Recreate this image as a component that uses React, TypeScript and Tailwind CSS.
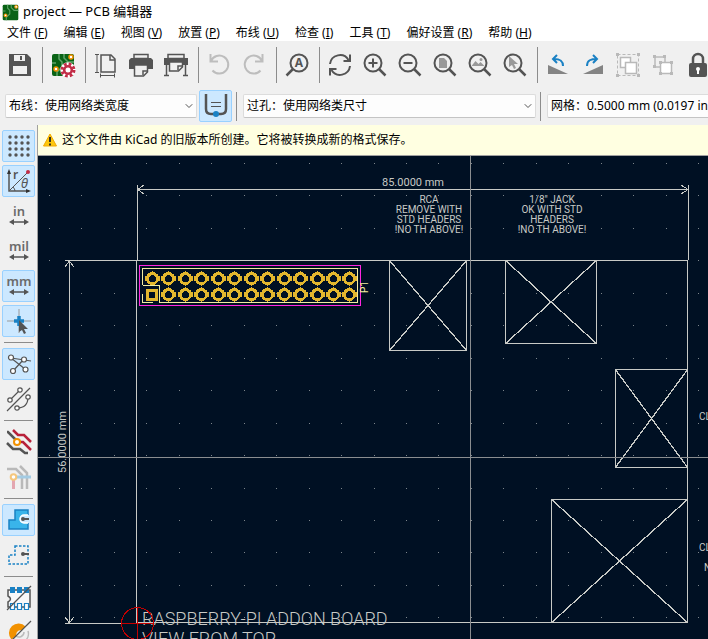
import React from "react";
import { ChevronDown } from "lucide-react";

type IconProps = { children: React.ReactNode };

const Icon = ({ children }: IconProps) => (
  <svg
    width="24"
    height="24"
    viewBox="0 0 24 24"
    fill="none"
    stroke="#545454"
    strokeWidth="2"
    className="shrink-0 overflow-visible"
    aria-hidden="true"
  >
    {children}
  </svg>
);

const BoardArt = () => (
  <>
    <rect x="1" y="1" width="22" height="22" rx="2" fill="#0a6316" stroke="none" />
    <path d="M8 1v5l3 3v5l-5 5v4M13 1v4l4 4h6M1 10h4" stroke="#5fa568" strokeWidth="1.5" />
    <circle cx="5" cy="16" r="2" fill="#fff" stroke="#f29100" strokeWidth="1.5" />
    <circle cx="20" cy="4" r="2" fill="#fff" stroke="#f29100" strokeWidth="1.5" />
  </>
);

const Magnifier = ({ children }: IconProps) => (
  <Icon>
    <circle cx="10" cy="10" r="8.5" />
    <path d="M16 16l6.5 6.5" strokeWidth="2.5" />
    {children}
  </Icon>
);

const groups = [
  [
    {
      label: "保存",
      icon: (
        <Icon>
          <path
            d="M1 1h18l4 4v18H1zM6 2v6h11V2zM5 13v8h14v-8z"
            fill="#545454"
            fillRule="evenodd"
            stroke="none"
          />
          <path d="M13 3v4" />
        </Icon>
      ),
    },
  ],
  [
    {
      label: "电路板设置",
      icon: (
        <Icon>
          <BoardArt />
          <circle cx="17" cy="17" r="6" stroke="#fff" strokeWidth="3.5" />
          <circle cx="17" cy="17" r="6" stroke="#c22d47" strokeWidth="3" strokeDasharray="2.7 2" />
          <circle cx="17" cy="17" r="3.8" fill="#fff" stroke="#c22d47" strokeWidth="2.6" />
        </Icon>
      ),
    },
  ],
  [
    {
      label: "页面设置",
      icon: (
        <Icon>
          <path d="M7 2h10l4 4v13H7z" strokeWidth="1.5" />
          <path d="M16 2v5h5" strokeWidth="1.5" />
          <path d="M1 1.5h4M3 2v17M1 19.5h4M6 22.5h15M6.5 20.5v4M20.5 20.5v4" strokeWidth="1" />
        </Icon>
      ),
    },
    {
      label: "打印",
      icon: (
        <Icon>
          <path d="M5 1.5h14v4H5z" strokeWidth="1.5" />
          <path d="M2 5h20l2 2v9H0V7z" fill="#545454" stroke="none" />
          <path d="M5.5 12h13v7l-4 4h-9z" fill="#f0f0f0" strokeWidth="1.5" />
          <path d="M14 22v-4h4" strokeWidth="1.5" />
        </Icon>
      ),
    },
    {
      label: "绘制",
      icon: (
        <Icon>
          <path d="M4 1.5h16v4H4z" strokeWidth="1.5" />
          <path d="M0 5h24v7H0z" fill="#545454" stroke="none" />
          <path d="M5.5 9h13v5l-4 4h-9z" fill="#f0f0f0" strokeWidth="1.5" />
          <path d="M14 17v-4h4" strokeWidth="1.5" />
          <path d="M2.5 11v11M21.5 11v11M0 22.5h5M19 22.5h5" strokeWidth="1.5" />
        </Icon>
      ),
    },
  ],
  [
    {
      label: "撤消",
      icon: (
        <Icon>
          <path d="M3.5 1v7.5H11M4 8a9 9 0 1 1 1.5 9.5" stroke="#bdbdbd" />
        </Icon>
      ),
    },
    {
      label: "重做",
      icon: (
        <Icon>
          <path d="M20.5 1v7.5H13M20 8a9 9 0 1 0-1.5 9.5" stroke="#bdbdbd" />
        </Icon>
      ),
    },
  ],
  [
    {
      label: "查找",
      icon: (
        <Icon>
          <circle cx="14" cy="10" r="8.5" />
          <path d="M8 16l-6.5 6.5" strokeWidth="2.5" />
          <text
            x="14"
            y="14"
            textAnchor="middle"
            fontSize="12"
            fontWeight="bold"
            fill="#545454"
            stroke="none"
          >
            A
          </text>
        </Icon>
      ),
    },
  ],
  [
    {
      label: "刷新",
      icon: (
        <Icon>
          <path d="M2 11a10 10 0 0 1 18.5-4M22 13a10 10 0 0 1-18.5 4" />
          <path d="M22 1.5V8h-6.5M2 22.5V16h6.5" />
        </Icon>
      ),
    },
    {
      label: "放大",
      icon: (
        <Magnifier>
          <path d="M10 5.5v9M5.5 10h9" />
        </Magnifier>
      ),
    },
    {
      label: "缩小",
      icon: (
        <Magnifier>
          <path d="M5.5 10h9" />
        </Magnifier>
      ),
    },
    {
      label: "缩放到页面",
      icon: (
        <Magnifier>
          <path d="M6 5h5l3 3v7H6z" fill="#999" stroke="none" />
        </Magnifier>
      ),
    },
    {
      label: "缩放到对象",
      icon: (
        <Magnifier>
          <path d="M3.5 13l4-5 3 3 2-2 4 4z" fill="#999" stroke="none" />
          <circle cx="13" cy="6.5" r="1.5" fill="#999" stroke="none" />
        </Magnifier>
      ),
    },
    {
      label: "缩放到选择",
      icon: (
        <Magnifier>
          <path d="M6 3v11l3-2 2 4 2-1-2-4h4z" fill="#999" stroke="none" />
        </Magnifier>
      ),
    },
  ],
  [
    {
      label: "逆时针旋转",
      icon: (
        <Icon>
          <path d="M2 12l20 9H2z" fill="#848484" stroke="none" />
          <path d="M17 13c0-6-4-7-9-7M11 2L7 6l4 4" stroke="#1a81c4" />
        </Icon>
      ),
    },
    {
      label: "顺时针旋转",
      icon: (
        <Icon>
          <path d="M22 12L2 21h20z" fill="#848484" stroke="none" />
          <path d="M6 13c0-6 4-7 10-7M12 2l4 4-4 4" stroke="#1a81c4" />
        </Icon>
      ),
    },
    {
      label: "分组",
      icon: (
        <Icon>
          <path d="M1.5 1.5h21v21h-21z" stroke="#b9b9b9" strokeWidth="1" strokeDasharray="3 2" />
          <path d="M4.5 4.5h10v10h-10z" fill="#fff" stroke="#b9b9b9" strokeWidth="1.5" />
          <path d="M9.5 9.5h11v11h-11z" fill="#fff" stroke="#b9b9b9" strokeWidth="1.5" />
          <path d="M0 0h3v3H0zM21 0h3v3h-3zM0 21h3v3H0zM21 21h3v3h-3z" fill="#b9b9b9" stroke="none" />
        </Icon>
      ),
    },
    {
      label: "取消分组",
      icon: (
        <Icon>
          <path d="M4 4h10v10H4z" fill="#f0f0f0" stroke="#b9b9b9" strokeWidth="1.5" />
          <path d="M9.5 9.5h11v11h-11z" fill="#fff" stroke="#b9b9b9" strokeWidth="1.5" />
          <path
            d="M2 2h3v3H2zM12 2h3v3h-3zM2 12h3v3H2zM8 8h3v3H8zM19 8h3v3h-3zM8 19h3v3H8zM19 19h3v3h-3z"
            fill="#b9b9b9"
            stroke="none"
          />
        </Icon>
      ),
    },
    {
      label: "锁定",
      icon: (
        <Icon>
          <path d="M7 11V6a5 5 0 0 1 10 0v5" strokeWidth="2.5" />
          <rect x="3" y="10" width="18" height="14" rx="2" fill="#545454" stroke="none" />
          <circle cx="12" cy="16" r="2" fill="#fff" stroke="none" />
          <path d="M12 16v5" stroke="#fff" />
        </Icon>
      ),
    },
  ],
];

const UnitIcon = ({ unit }: { unit: string }) => (
  <Icon>
    <text
      x="12"
      y="12"
      textAnchor="middle"
      fontSize="13"
      fontWeight="600"
      fill="#6b6b6b"
      stroke="none"
    >
      {unit}
    </text>
    <path d="M5 18h14" strokeWidth="1.5" />
    <path d="M2 18l5-3v6zM22 18l-5-3v6z" fill="#545454" stroke="none" />
  </Icon>
);

const sideGroups = [
  [
    {
      label: "显示栅格",
      active: true,
      icon: (
        <Icon>
          {[3, 9, 15, 21].map((y) =>
            [3, 9, 15, 21].map((x) => (
              <circle key={`${x}-${y}`} cx={x} cy={y} r="1.7" fill="#545454" stroke="none" />
            ))
          )}
        </Icon>
      ),
    },
    {
      label: "极坐标",
      active: true,
      icon: (
        <Icon>
          <path d="M2 2v20h20" strokeWidth="1.5" />
          <path d="M0 5l2-5 2 5zM19 20l5 2-5 2z" fill="#333" stroke="none" />
          <path d="M2 22L21 3M6 18q2 2 2 4" strokeWidth="1" />
          <circle cx="21" cy="3" r="2" fill="#c22d47" stroke="none" />
          <text x="6" y="10" fontSize="12" fontWeight="600" fill="#545454" stroke="none">
            r
          </text>
          <text x="14" y="19" fontSize="13" fontStyle="italic" fill="#545454" stroke="none">
            θ
          </text>
        </Icon>
      ),
    },
    { label: "英寸", active: false, icon: <UnitIcon unit="in" /> },
    { label: "密耳", active: false, icon: <UnitIcon unit="mil" /> },
    { label: "毫米", active: true, icon: <UnitIcon unit="mm" /> },
    {
      label: "全屏光标",
      active: true,
      icon: (
        <Icon>
          <path d="M12 0v24M0 12h24" stroke="#999" strokeWidth="1" />
          <path d="M12 7v10M7 12h10" stroke="#1a81c4" strokeWidth="3.5" />
          <path d="M12 11v12l3-2 2 4 2-1-2-4h4z" fill="#545454" stroke="none" />
        </Icon>
      ),
    },
  ],
  [
    {
      label: "显示飞线",
      active: true,
      icon: (
        <Icon>
          <path d="M4 6l14 11M4 6l20 3M17 7L6 19" strokeWidth="1.2" />
          {[[4, 5.5], [17, 7.5], [6, 19], [18.5, 17.5]].map(([x, y]) => (
            <circle key={x} cx={x} cy={y} r="2.5" fill="#fff" strokeWidth="1.2" />
          ))}
        </Icon>
      ),
    },
    {
      label: "曲线飞线",
      active: false,
      icon: (
        <Icon>
          <path d="M0 24L23 1M3 13L13 3M10 21q11 0 11-11" strokeWidth="1.2" />
          {[[3, 13], [13, 3], [10, 21], [21, 10]].map(([x, y]) => (
            <circle key={x} cx={x} cy={y} r="2.2" fill="#fff" strokeWidth="1.2" />
          ))}
        </Icon>
      ),
    },
  ],
  [
    {
      label: "高对比度",
      active: false,
      icon: (
        <Icon>
          <path d="M0 2h1l9 9M0 13l6 6h7l5 4h3" strokeWidth="2.5" />
          <path d="M6 0l5 5h6l7 7M10 12h6l8 8" stroke="#b8213a" strokeWidth="2.5" />
          <circle cx="10" cy="12" r="3" fill="#fff" stroke="#f29100" />
        </Icon>
      ),
    },
    {
      label: "网络高亮",
      active: false,
      icon: (
        <Icon>
          <path d="M0 4h9l6 6v14M13 1l7 7v16" stroke="#b9b9b9" strokeWidth="2.5" />
          <path d="M8 12h16" stroke="#a3cbe3" strokeWidth="3" />
          <path d="M6.5 12v12" stroke="#e3a6b0" strokeWidth="3" />
          <circle cx="6.5" cy="12" r="2.8" fill="#fff" stroke="#f5c77c" />
        </Icon>
      ),
    },
  ],
  [
    {
      label: "填充区域",
      active: true,
      icon: (
        <Icon>
          <path d="M8 2h13v5h-4a4 4 0 0 0 0 8h4v6H2v-9h6z" fill="#39b4ea" stroke="none" />
          <path
            d="M21 7V2H8v10H2v9h19v-6"
            stroke="#1a81c4"
            strokeWidth="1.5"
          />
          <path d="M21 7h-4a4 4 0 0 0 0 8h4" stroke="#fff" strokeWidth="1.5" />
          <path d="M16 11h6" />
          <circle cx="16" cy="11" r="2" fill="#545454" stroke="none" />
        </Icon>
      ),
    },
    {
      label: "区域轮廓",
      active: false,
      icon: (
        <Icon>
          <path d="M8 3h13v18H2v-9h6z" stroke="#1a81c4" strokeWidth="1.5" strokeDasharray="2.5 1.5" />
          <path d="M16 11h6" />
          <circle cx="16" cy="11" r="2" fill="#545454" stroke="none" />
        </Icon>
      ),
    },
  ],
  [
    {
      label: "焊盘轮廓",
      active: false,
      icon: (
        <Icon>
          <path d="M1 4h22v17H1v-5q5-3 0-6z" strokeWidth="1.5" fill="#f8f8f8" />
          <path d="M3 1h5v6H3zM10 1h5v6h-5zM17 1h5v6h-5z" fill="#1a81c4" stroke="none" />
          <path
            d="M3.5 17.5h4v6h-4zM10.5 17.5h4v6h-4zM17.5 17.5h4v6h-4z"
            fill="#fff"
            stroke="#1a81c4"
            strokeWidth="1.2"
          />
          <path d="M0 24L24 0" strokeWidth="1.2" />
        </Icon>
      ),
    },
    {
      label: "过孔轮廓",
      active: false,
      icon: (
        <Icon>
          <path d="M21 10a9 9 0 0 1-15 9M17 11a5 5 0 0 1-8 4" stroke="#bbb" strokeWidth="1.5" />
          <path
            d="M4.5 18.5A9.500 9.500 0 0 1 18.500 5.500l-4 4a4 4 0 0 0-5 5z"
            fill="#f29100"
            stroke="none"
          />
          <path d="M0 24L24 0" strokeWidth="1.2" />
        </Icon>
      ),
    },
  ],
];

const menus = [
  ["文件", "F"],
  ["编辑", "E"],
  ["视图", "V"],
  ["放置", "P"],
  ["布线", "U"],
  ["检查", "I"],
  ["工具", "T"],
  ["偏好设置", "R"],
  ["帮助", "H"],
];

const dots = Array.from({ length: 70 }, (_, i) => Math.round(49 + i * 32.45));
const rows = Array.from({ length: 50 }, (_, i) => Math.round(163 + i * 32.45));
const pins = Array.from({ length: 13 }, (_, i) => Math.round(152 + i * 16.45));

// keepout boxes: left, top, right, bottom
const boxes = [
  [389, 260, 466, 350],
  [505, 260, 596, 343],
  [615, 369, 687, 467],
  [551, 499, 687, 622],
];

const notes = [
  { x: 429, lines: ["RCA", "REMOVE WITH", "STD HEADERS", "!NO TH ABOVE!"] },
  { x: 552, lines: ['1/8" JACK', "OK WITH STD", "HEADERS", "!NO TH ABOVE!"] },
];

const Pad = ({ x, y }: { x: number; y: number }) => (
  <>
    <circle cx={x + 0.5} cy={y + 0.5} r="5" strokeWidth="3" />
    <path d={`M${x - 6.5} ${y - 2}v5M${x + 7.5} ${y - 2}v5M${x} ${y - 6.5}h1M${x} ${y + 7.5}h1`} />
  </>
);

const BoardCanvas = () => (
  <svg
    className="h-full w-full font-['Roboto',sans-serif]"
    role="img"
    aria-label="PCB"
    shapeRendering="crispEdges"
  >
    <g transform="translate(-38 -156)" fill="none" stroke="#c8cac6">
      <g fill="#7d858b" stroke="none">
        {rows.map((y) => dots.map((x) => <rect key={`${x}-${y}`} x={x} y={y} width="1" height="1" />))}
      </g>

      <path d="M137.5 185v75M688.5 185v75M137 189.5h551M65 260.5h72M65 623.5h72M69.5 260v363" />
      <path d="M144 185l-6 4.5 6 4.5M681 185l7 4.5-7 4.5M65 267l4.5-6 4.5 6M65 617l4.5 6 4.5-6" />
      <rect x="136.5" y="260.5" width="551" height="362" />
      {boxes.map(([l, t, r, b]) => (
        <g key={`${l}-${t}`}>
          <rect x={l + 0.5} y={t + 0.5} width={r - l} height={b - t} />
          <path d={`M${l} ${t}L${r + 1} ${b + 1}M${r + 1} ${t}L${l} ${b + 1}`} strokeWidth="1.3" />
        </g>
      ))}

      <g fill="#c8cac6" stroke="none" fontSize="10">
        <text x="382" y="186" fontSize="11">
          85.0000 mm
        </text>
        <text transform="translate(66 473) rotate(-90)" fontSize="11">
          56.0000 mm
        </text>
        {notes.map((note) =>
          note.lines.map((line, i) => (
            <text key={`${note.x}-${i}`} x={note.x} y={203 + i * 10} textAnchor="middle">
              {line}
            </text>
          ))
        )}
        <text x="699" y="420">CL</text>
        <text x="699" y="551">CL</text>
        <text x="704" y="571">N</text>
        <g fontSize="18" fontWeight="300">
          <text x="142" y="625">RASPBERRY-PI ADDON BOARD</text>
          <text x="142" y="645">VIEW FROM TOP</text>
        </g>
      </g>

      <rect x="139.5" y="265.5" width="221" height="40" stroke="#ff26e2" />
      <g stroke="#e3b72e">
        <rect x="147" y="290" width="9" height="9" strokeWidth="3" />
        {pins.map((x, i) => (
          <React.Fragment key={x}>
            <Pad x={x} y={278} />
            {i > 0 && <Pad x={x} y={294} />}
          </React.Fragment>
        ))}
      </g>
      <path d="M142.5 285V268.5h215v34H159.5v-17h-17M142.5 294v8.5h10" stroke="#f2eda1" />
      <text transform="translate(368 293) rotate(-90)" fontSize="10" fill="#f2eda1" stroke="none">
        P1
      </text>

      <g stroke="#c40000">
        <circle cx="137.5" cy="623.5" r="16" />
        <path d="M121 623.5h33M137.5 607v33" />
      </g>
      <path d="M470.5 0v4000M0 457.5h4000" stroke="#8a8d90" />
    </g>
  </svg>
);

type PickerProps = { label: string; value: string; className: string };

const Picker = ({ label, value, className }: PickerProps) => (
  <div className={`relative shrink-0 ${className}`}>
    <select
      aria-label={label}
      className="h-6 w-full appearance-none rounded-xs border border-[#dcdcdc] border-b-[#c4c4c4] bg-[#fdfdfd] pl-[3px] pr-6 text-xs text-black outline-none"
    >
      <option>{value}</option>
    </select>
    <ChevronDown
      className="pointer-events-none absolute right-0.5 top-1.5 size-3 text-[#555]"
      strokeWidth={2}
    />
  </div>
);

export default function App() {
  return (
    <div className="flex h-screen w-full flex-col overflow-hidden bg-[#f0f0f0] font-['Noto_Sans','Noto_Sans_CJK_SC',sans-serif] text-xs text-black">
      <header className="flex h-6 shrink-0 items-center gap-1 bg-white px-0.5">
        <svg width="17" height="17" viewBox="0 0 24 24" fill="none" aria-hidden="true">
          <BoardArt />
        </svg>
        <h1 className="text-[13px]">project — PCB 编辑器</h1>
      </header>

      <nav className="flex h-[17px] shrink-0 items-center gap-4 whitespace-nowrap bg-white px-[7px]">
        {menus.map(([name, key]) => (
          <button key={key} type="button">
            {name} (<span className="underline">{key}</span>)
          </button>
        ))}
      </nav>

      <div className="flex h-12 shrink-0 items-center gap-px overflow-hidden pl-[3px]">
        {groups.map((group, i) => (
          <React.Fragment key={i}>
            {i > 0 && <span className="ml-1 mr-0.5 h-9 w-px shrink-0 bg-[#8c8c8c]" />}
            {group.map((tool) => (
              <button
                key={tool.label}
                type="button"
                aria-label={tool.label}
                className="flex h-8 w-[34px] shrink-0 items-center justify-center"
              >
                {tool.icon}
              </button>
            ))}
          </React.Fragment>
        ))}
      </div>

      <div className="flex h-9 shrink-0 items-center overflow-hidden pb-0.5 pl-[5px]">
        <Picker label="布线宽度" value="布线：使用网络类宽度" className="w-48" />
        <button
          type="button"
          aria-label="自动布线宽度"
          aria-pressed="true"
          className="ml-0.5 flex h-8 w-[33px] shrink-0 items-center justify-center rounded-xs border border-[#99d1ff] bg-[#cce8ff]"
        >
          <Icon>
            <path d="M2 0v15q0 5 5 5h10q5 0 5-5V0" strokeWidth="2.5" />
            <path d="M7 8.5h10M7 12.5h10" strokeWidth="1" />
            <circle cx="12" cy="20" r="3" fill="#1a81c4" stroke="none" />
          </Icon>
        </button>
        <span className="mx-1 h-[29px] w-px shrink-0 bg-[#8c8c8c]" />
        <Picker label="过孔尺寸" value="过孔：使用网络类尺寸" className="ml-0.5 w-[293px]" />
        <span className="mx-1 h-[29px] w-px shrink-0 bg-[#8c8c8c]" />
        <Picker label="网格" value="网格：0.5000 mm (0.0197 in)" className="ml-0.5 w-60" />
      </div>

      <div className="flex min-h-0 flex-1">
        <aside className="flex w-[38px] shrink-0 flex-col gap-[3px] overflow-hidden border-r border-[#a0a0a0] pl-0.5 pt-[5px]">
          {sideGroups.map((group, i) => (
            <React.Fragment key={i}>
              {i > 0 && <span className="my-0.5 ml-0.5 h-px w-[29px] shrink-0 bg-[#8c8c8c]" />}
              {group.map((tool) => (
                <button
                  key={tool.label}
                  type="button"
                  aria-label={tool.label}
                  aria-pressed={tool.active}
                  className={`flex h-8 w-[33px] shrink-0 items-center justify-center rounded-xs border ${
                    tool.active ? "border-[#99d1ff] bg-[#cce8ff]" : "border-transparent"
                  }`}
                >
                  {tool.icon}
                </button>
              ))}
            </React.Fragment>
          ))}
        </aside>

        <main className="flex min-w-0 flex-1 flex-col">
          <div className="flex h-[31px] shrink-0 items-center gap-1 border-b border-[#a0a0a0] bg-[#ffffe1] px-1">
            <svg width="16" height="16" viewBox="0 0 16 16" aria-hidden="true">
              <path d="M8 2l6.5 12h-13z" fill="#fdc80a" stroke="#f2a900" strokeLinejoin="round" />
              <path d="M8 5v5M8 11.5v2" stroke="#222" strokeWidth="1.8" />
            </svg>
            <p>这个文件由 KiCad 的旧版本所创建。它将被转换成新的格式保存。</p>
          </div>
          <div className="min-h-0 flex-1 overflow-hidden bg-[#001023]">
            <BoardCanvas />
          </div>
        </main>
      </div>
    </div>
  );
}
